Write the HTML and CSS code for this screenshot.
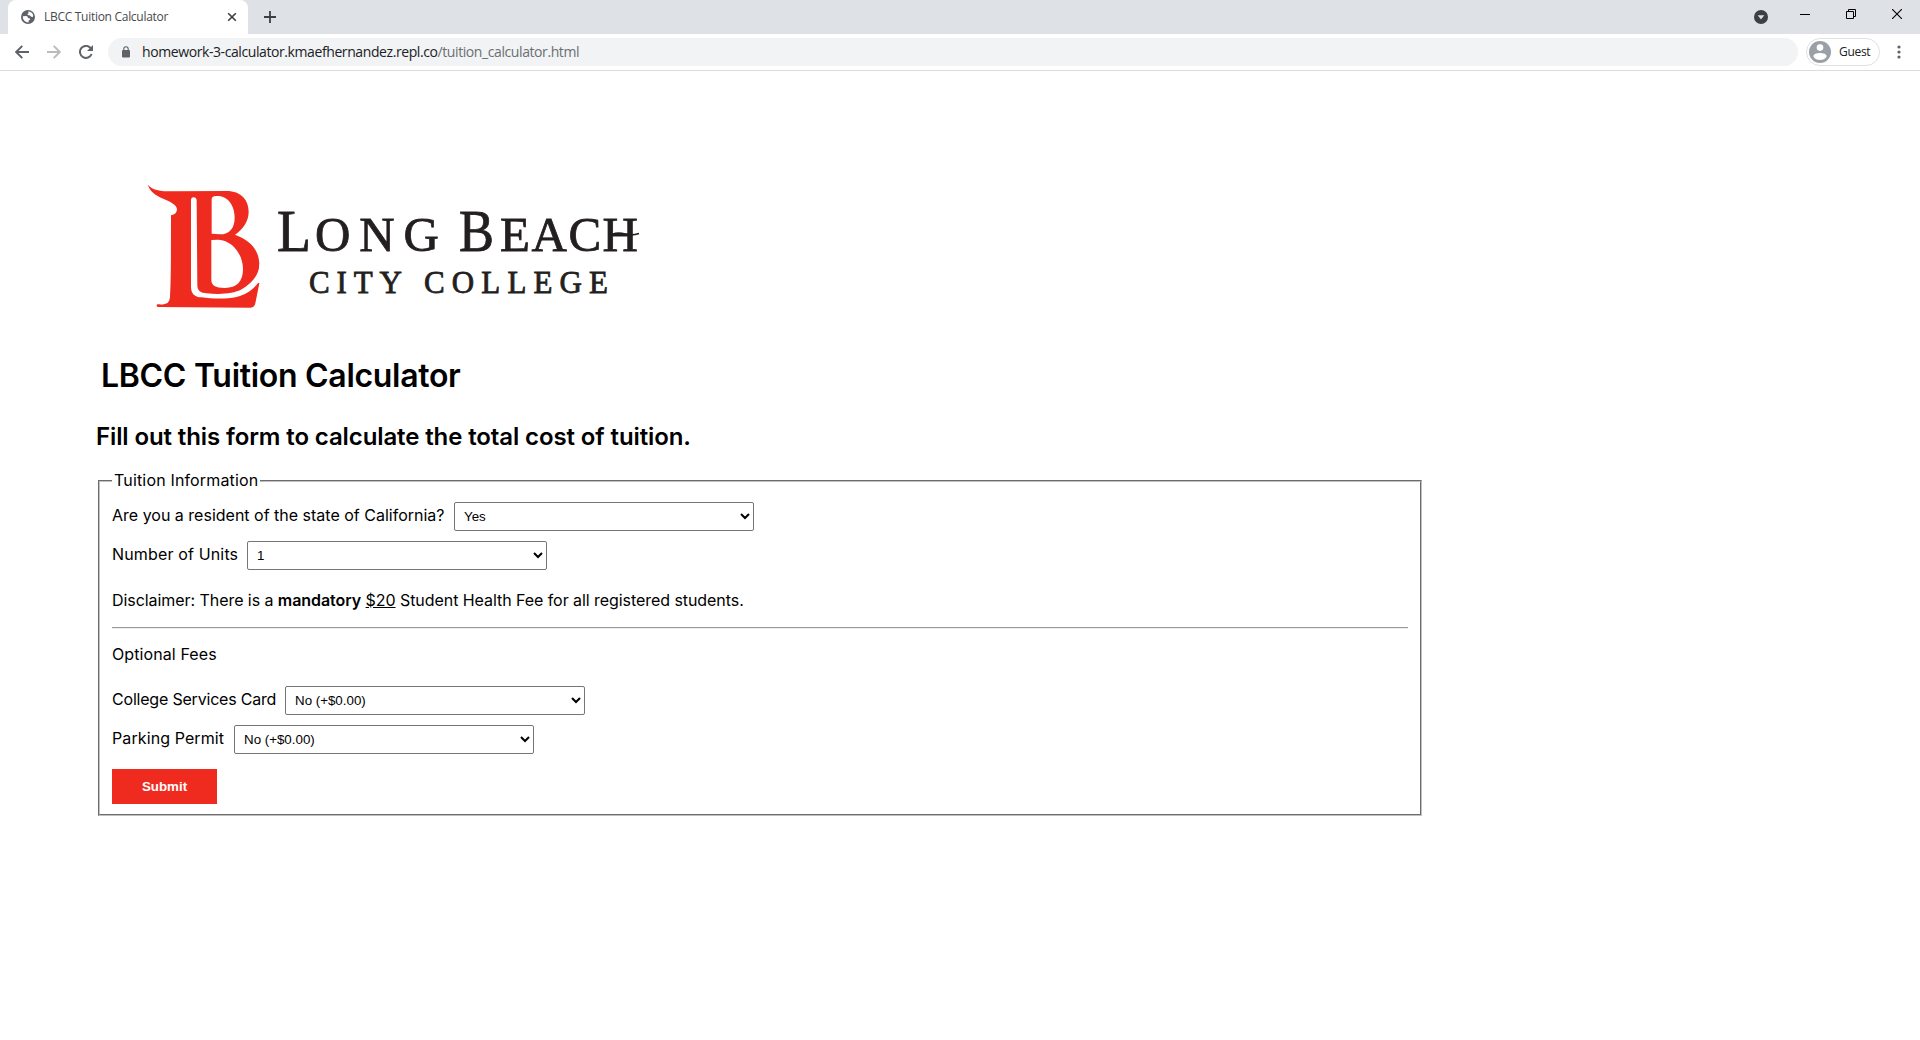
FILE: index.html
```html
<!DOCTYPE html>
<html lang="en">
<head>
<meta charset="utf-8">
<title>LBCC Tuition Calculator</title>
<link rel="stylesheet" href="styles.css">
</head>
<body>
<header class="browser">
  <div class="tabstrip">
    <div class="tab">
      <svg class="globe" width="14" height="14" viewBox="0 0 14 14"><circle cx="7" cy="7" r="7" fill="#5f6368"/><path d="M2 6.2 L5 6 Q7 6.2 7 8 L9 8.4 Q9.3 10 7.8 10.4 L7.4 12.4 Q2.6 12 1.8 7.5Z M7.2 1.6 Q11 1.6 12.2 5.2 L11.8 7 Q9.6 7.2 9 5.6 L6.8 5 Q5.8 3.8 7.6 3.2Z" fill="#fff"/></svg>
      <span class="tab-title">LBCC Tuition Calculator</span>
      <svg class="tab-close" width="10" height="10" viewBox="0 0 10 10"><path d="M1.2 1.2 8.8 8.8M8.8 1.2 1.2 8.8" stroke="#3c4043" stroke-width="1.6"/></svg>
    </div>
    <svg class="plus" width="12" height="12" viewBox="0 0 12 12"><path d="M6 0V12M0 6H12" stroke="#3c4043" stroke-width="1.8"/></svg>
    <div class="window-controls">
      <svg width="14" height="14" viewBox="0 0 14 14"><circle cx="7" cy="7" r="7" fill="#3c4043"/><path d="M3.7 5.2H10.3L7 9.5Z" fill="#dee1e6"/></svg>
      <svg class="min" width="10" height="10" viewBox="0 0 10 10"><path d="M0 5.5H10" stroke="#000"/></svg>
      <svg class="restore" width="10" height="10" viewBox="0 0 10 10"><path d="M.5 2.5H7.5V9.5H.5ZM2.5 2.5V.5H9.5V7.5H7.5" fill="none" stroke="#000"/></svg>
      <svg class="close" width="10" height="10" viewBox="0 0 10 10"><path d="M0 0 10 10M10 0 0 10" stroke="#000" stroke-width="1.1"/></svg>
    </div>
  </div>
  <div class="toolbar">
    <svg class="nav" width="14" height="14" viewBox="0 0 14 14"><path d="M14 7H1.5M7.3 .8 1.2 7 7.3 13.2" fill="none" stroke="#5f6368" stroke-width="1.9"/></svg>
    <svg class="nav" width="14" height="14" viewBox="0 0 14 14"><path d="M0 7H12.5M6.7 .8 12.8 7 6.7 13.2" fill="none" stroke="#babcbe" stroke-width="1.9"/></svg>
    <svg class="reload" width="14" height="14" viewBox="0 0 14 14"><path d="M12.6 9A6 6 0 1 1 11.3 2.7L12 3.4" fill="none" stroke="#5f6368" stroke-width="2"/><path d="M14 0V6H8Z" fill="#5f6368"/></svg>
    <div class="omnibox">
      <svg width="8" height="12" viewBox="0 0 8 12"><rect y="4" width="8" height="7.5" rx="1" fill="#5f6368"/><path d="M1.8 5V2.9A2.2 2.2 0 0 1 6.2 2.9V5" fill="none" stroke="#5f6368" stroke-width="1.1"/></svg>
      <span class="host">homework-3-calculator.kmaefhernandez.repl.co</span><span class="path">/tuition_calculator.html</span>
    </div>
    <div class="profile">
      <svg width="22" height="22" viewBox="0 0 22 22"><circle cx="11" cy="11" r="11" fill="#9aa0a6"/><circle cx="11" cy="6.6" r="3.3" fill="#fff"/><path d="M4.3 15.5C4.3 10.9 17.7 10.9 17.7 15.5Q15.5 19 11 19T4.3 15.5Z" fill="#fff"/></svg>
      <span>Guest</span>
    </div>
    <svg class="dots" width="4" height="14" viewBox="0 0 4 14"><g fill="#5f6368"><circle cx="2" cy="2" r="1.6"/><circle cx="2" cy="7" r="1.6"/><circle cx="2" cy="12" r="1.6"/></g></svg>
  </div>
</header>
<main class="page">
  <svg class="logo" width="520" height="150" viewBox="0 0 520 150" role="img" aria-label="Long Beach City College">
    <g transform="scale(.33333)">
      <path fill="#ef2b20" d="M54 44C66 60 88 64 130 64L290 63C333 63 356 90 356 125C356 155 338 178 315 194C360 210 388 240 388 285L388 340L376 400Q373 413 362 413L85 411C78 409 78 403 85 403C110 404 118 400 120 380C123 330 123 250 123 136C135 134 141 127 141 117C139 104 122 95 100 86C75 76 58 62 54 44Z"/>
      <path fill="#fff" d="M183 92Q183 82 191 82T200 92L202 345C202 362 212 369 230 370C270 374 310 372 335 358C365 340 388 315 388 283L394 283V338L384 339C375 352 355 370 330 378C300 388 250 387 215 382C195 381 183 372 183 350Z"/>
      <path fill="#fff" d="M245 88C245 80 252 78 262 78C295 78 314 108 314 143C314 175 298 193 270 193L245 191ZM244 210L265 209C310 212 339 255 339 298C339 335 320 354 285 354C255 354 244 345 244 330Z"/>
    </g>
    <g class="wordmark">
      <text x="147" y="81" font-size="59" textLength="34" lengthAdjust="spacingAndGlyphs">L</text>
      <text x="185" y="81" font-size="49" textLength="124">ONG</text>
      <text x="329" y="81" font-size="59" textLength="35" lengthAdjust="spacingAndGlyphs">B</text>
      <text x="370" y="81" font-size="49" textLength="138">EACH</text>
      <path d="M482 64.5Q488 62 495 64T509 63.5" fill="none" stroke-width="1.8"/>
      <text x="179" y="123.3" font-size="31" textLength="93">CITY</text>
      <text x="294" y="123.3" font-size="31" textLength="184">COLLEGE</text>
    </g>
  </svg>
  <h1>LBCC Tuition Calculator</h1>
  <h2>Fill out this form to calculate the total cost of tuition.</h2>
  <fieldset>
    <legend>Tuition Information</legend>
    <div class="row"><label class="resident" for="resident">Are you a resident of the state of California?</label><select id="resident"><option>Yes</option><option>No</option></select></div>
    <div class="row"><label class="units" for="units">Number of Units</label><select id="units"><option>1</option><option>2</option></select></div>
    <p class="disclaimer">Disclaimer: There is a <b>mandatory</b> <u>$20</u> Student Health Fee for all registered students.</p>
    <hr>
    <p class="optional">Optional Fees</p>
    <div class="row"><label class="card" for="card">College Services Card</label><select id="card"><option>No (+$0.00)</option></select></div>
    <div class="row"><label class="permit" for="permit">Parking Permit</label><select id="permit"><option>No (+$0.00)</option></select></div>
    <button type="button">Submit</button>
  </fieldset>
</main>
</body>
</html>
```
FILE: styles.css
```css
* { box-sizing: border-box; }
body { margin: 0; background: #fff; color: #000; font: 16px/20px Inter, sans-serif; }
svg { display: block; flex: none; }

.browser { height: 71px; border-bottom: 1px solid #dadce0; font-family: "Open Sans", sans-serif; white-space: nowrap; }
.tabstrip { display: flex; height: 34px; background: #dee1e6; padding-left: 8px; }
.tab { display: flex; align-items: center; width: 240px; height: 34px; background: #fff; border-radius: 8px 8px 0 0; padding: 0 11px 0 13px; }
.tab-title { flex: 1; margin-left: 9px; font-size: 12px; letter-spacing: -0.29px; color: #45494d; }
.plus { margin: 11px 0 0 16px; }
.window-controls { display: flex; margin: 10px 18px 0 auto; }
.min { margin: -1px 0 0 32px; }
.restore, .close { margin: -1px 0 0 36px; }

.toolbar { display: flex; align-items: center; height: 36px; padding-left: 15px; }
.nav { margin-right: 18px; }
.omnibox { display: flex; align-items: center; width: 1690px; height: 28px; margin-left: 15px; padding-left: 14px; border-radius: 14px; background: #f1f3f4; font-size: 14px; letter-spacing: -0.41px; }
.host { margin-left: 12px; color: #202124; }
.path { color: #6b6f73; }
.profile { display: flex; align-items: center; gap: 8px; width: 74px; height: 28px; margin-left: 8px; padding-left: 2px; border: 1px solid #dfe1e5; border-radius: 14px; font-size: 12px; letter-spacing: -0.3px; color: #202124; }
.dots { margin-left: 17px; }

.page { padding: 99px 0 0 96px; }
.logo { margin-left: 34px; }
.wordmark { font-family: "Liberation Serif", serif; fill: #231f20; stroke: #231f20; stroke-width: .8px; }
h1 { margin: 36px 0 0 5px; font-size: 32px; line-height: 40px; font-weight: 600; letter-spacing: -0.3px; }
h2 { margin: 26px 0 0; font-size: 24px; line-height: 30px; font-weight: 600; letter-spacing: -0.11px; }
fieldset { width: 1324px; height: 345px; margin: 19px 0 0 2px; padding: 1px 12px 0; border: 2px groove #c0c0c0; }
legend { padding: 0 2px 2px; line-height: 18px; letter-spacing: 0.16px; }
.row { display: flex; align-items: center; gap: 10px; height: 29px; margin: 10px 0; }
label { padding-bottom: 3px; white-space: nowrap; }
.resident { width: 332px; letter-spacing: 0; }
.units { width: 125px; letter-spacing: 0.15px; }
.card { width: 163px; letter-spacing: -0.2px; }
.permit { width: 112px; letter-spacing: 0.1px; }
select { width: 300px; height: 29px; padding: 0 5px; border: 1px solid #767676; border-radius: 2px; background: #fff; color: #000; font: 13.333px "Liberation Sans", sans-serif; }
p { margin: 0; padding-bottom: 2px; line-height: 18px; }
.disclaimer { margin-top: 21px; letter-spacing: -0.06px; white-space: nowrap; }
b { font-weight: 600; }
hr { height: 2px; margin: 16px 0; border: 0; border-top: 1px solid #9a9a9a; border-bottom: 1px solid #eee; }
.optional { margin-bottom: 21px; letter-spacing: 0.1px; }
button { display: block; width: 105px; height: 35px; margin-top: 15px; border: 0; background: #ef2b20; color: #fff; font: bold 13.333px "Liberation Sans", sans-serif; }
```
